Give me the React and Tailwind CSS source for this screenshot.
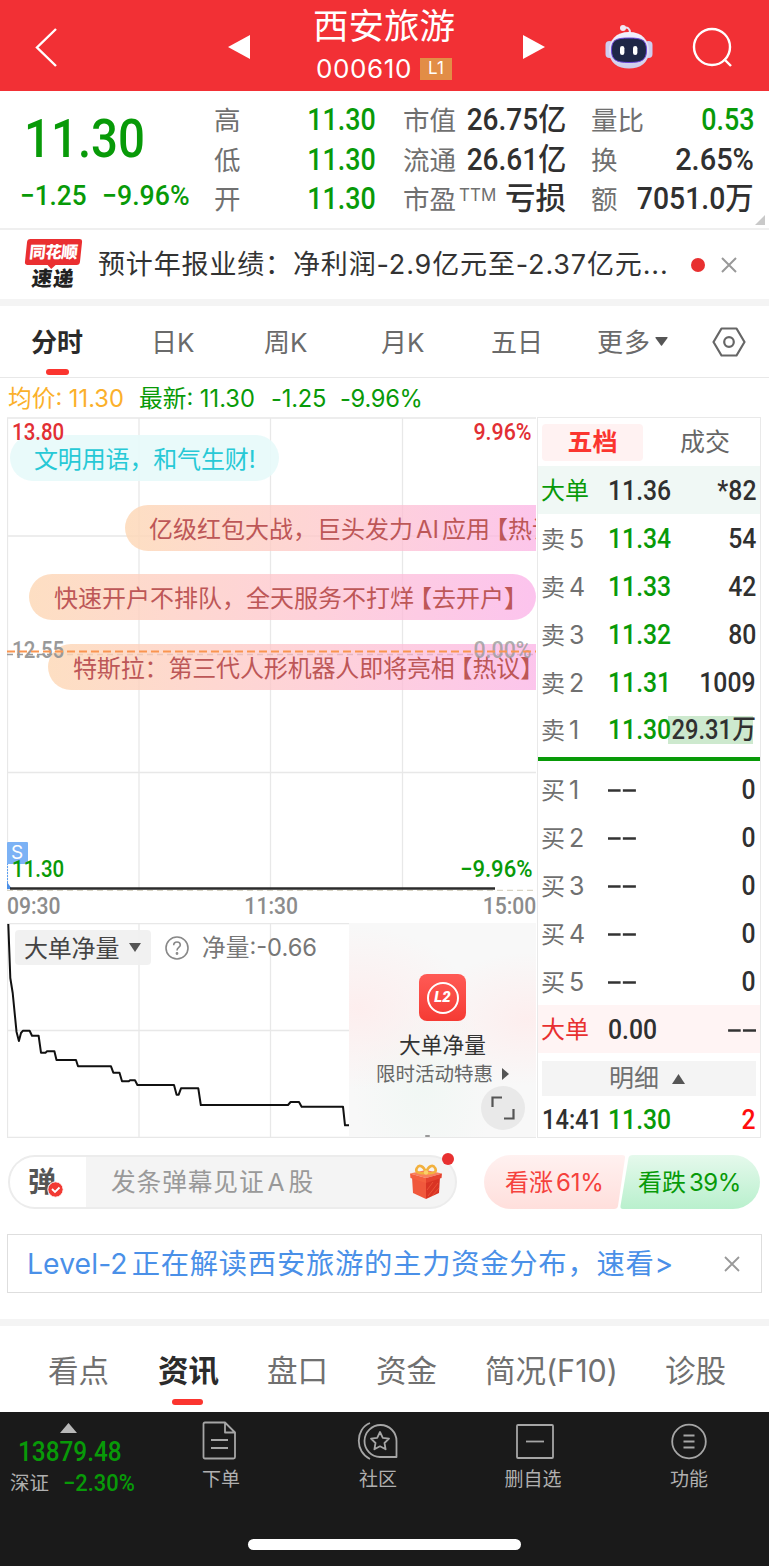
import React from "react";

const SANS = "font-['Inter','Noto_Sans_CJK_SC',sans-serif]";
const DIN = "font-['Roboto','Noto_Sans_CJK_SC',sans-serif] font-medium";

const sells = [
  ["5", "11.34", "54"],
  ["4", "11.33", "42"],
  ["3", "11.32", "80"],
  ["2", "11.31", "1009"],
];

function Header() {
  return (
    <header className="flex h-[91px] items-center bg-[#f23035] text-white">
      <svg className="ml-[34px] mt-1 h-[40px] w-[24px]" viewBox="0 0 24 40" fill="none" stroke="#fff" strokeWidth="2.4">
        <path d="M22 1 L3 19.5 L22 38" />
      </svg>
      <svg className="ml-[170px] mt-[3px] h-[26px] w-[23px]" viewBox="0 0 23 26">
        <path d="M0 13 L22 1 V25 Z" fill="#fff" />
      </svg>
      <div className="ml-[57px] flex w-[152px] flex-col items-center">
        <div className="-mt-[3px] h-[49px] text-[35.5px] leading-[46px]">西安旅游</div>
        <div className="flex h-[32px] items-center gap-[8px]">
          <span className="text-[26px] leading-[32px] tracking-[0.6px]">000610</span>
          <span className="flex h-[22px] w-[32px] items-center justify-center bg-[#e28d46] text-[17px] leading-none">L1</span>
        </div>
      </div>
      <svg className="ml-[62px] mt-[3px] h-[26px] w-[23px]" viewBox="0 0 23 26">
        <path d="M23 13 L1 1 V25 Z" fill="#fff" />
      </svg>
      <svg className="ml-[59px] h-[48px] w-[50px]" viewBox="0 0 50 48">
        <defs>
          <linearGradient id="shell" x1="0" y1="0" x2="0" y2="1">
            <stop offset="0" stopColor="#f3f1fd" />
            <stop offset="1" stopColor="#cfcdea" />
          </linearGradient>
        </defs>
        <path d="M19 6 Q26 4 26 11" fill="none" stroke="#e6e3f4" strokeWidth="2" />
        <circle cx="19" cy="6" r="3" fill="#f2e9f5" />
        <rect x="1.5" y="19" width="8" height="17" rx="4" fill="#cfcdf0" />
        <rect x="40.5" y="19" width="8" height="17" rx="4" fill="#cfcdf0" />
        <path d="M25 10 C38 10 45 18 45 29 C45 41 36 46.500 25 46.500 C14 46.500 5 41 5 29 C5 18 12 10 25 10Z" fill="url(#shell)" />
        <path d="M25 16 C38 16 42.500 18 42.500 28 C42.500 38 38 40.500 25 40.500 C12 40.500 7.500 38 7.500 28 C7.500 18 12 16 25 16Z" fill="#1f2747" stroke="#6a45d8" strokeWidth="1" />
        <rect x="16" y="24" width="4.400" height="9" rx="2.200" fill="#fff" />
        <rect x="29" y="24" width="4.400" height="9" rx="2.200" fill="#fff" />
      </svg>
      <svg className="ml-[38px] mt-[4px] h-[42px] w-[42px]" viewBox="0 0 42 42" fill="none" stroke="#fff" strokeWidth="2.400">
        <circle cx="20" cy="20" r="18" />
        <path d="M32 32 L39 39" />
      </svg>
    </header>
  );
}

function Quote() {
  const rows = [
    ["高", "市值", "", "26.75亿", "量比", "0.53", "text-[#089a08] scale-x-[0.88]"],
    ["低", "流通", "", "26.61亿", "换", "2.65%", "text-[#303030] scale-x-[0.95]"],
    ["开", "市盈", "TTM", "亏损", "额", "7051.0万", "text-[#303030] scale-x-[0.93]"],
  ];
  return (
    <section className="relative flex h-[139px] border-b-2 border-[#efefef]">
      <div className={`w-[214px] text-[#089a08] ${DIN}`}>
        <div className="ml-[24px] mt-[14px] h-[66px] origin-left scale-x-[0.87] text-[54.500px] leading-[66px]">11.30</div>
        <div className="ml-[20px] mt-[9px] flex h-[32px] text-[27.500px] leading-[32px]">
          <span className="w-[82px] origin-left scale-x-[0.95]">−1.25</span>
          <span className="origin-left scale-x-[0.97]">−9.96%</span>
        </div>
      </div>
      <div className="mt-[9px] flex flex-col">
        {rows.map(([a, b, sup, v, c, w, color]) => (
          <div key={a} className="flex h-[39.500px] items-center leading-[39px]">
            <span className="w-[70px] pt-[2px] text-[26.500px] text-[#707070]">{a}</span>
            <span className={`flex w-[92px] justify-end text-[30.500px] text-[#089a08] ${DIN}`}>
              <span className="origin-right scale-x-[0.88]">11.30</span>
            </span>
            <span className="ml-[27px] flex w-[163px] items-center text-[26.500px] text-[#707070]">
              <span className="shrink-0 whitespace-nowrap pt-[2px]">{b}</span>
              {sup && <span className="ml-[3px] -mt-[6px] text-[17px]">{sup}</span>}
              <span className={`ml-auto origin-right whitespace-nowrap text-[30.500px] text-[#303030] ${DIN} ${sup ? "" : "scale-x-[0.92]"}`}>{v}</span>
            </span>
            <span className="ml-[25px] flex w-[163px] items-center text-[26.500px] text-[#707070]">
              <span className="shrink-0 pt-[2px]">{c}</span>
              <span className={`ml-auto origin-right whitespace-nowrap text-[30.500px] ${DIN} ${color}`}>{w}</span>
            </span>
          </div>
        ))}
      </div>
      <svg className="absolute bottom-[3px] right-[4px] h-[10px] w-[10px]" viewBox="0 0 10 10">
        <path d="M10 0 V10 H0Z" fill="#c9c9c9" />
      </svg>
    </section>
  );
}

function News() {
  return (
    <section className="flex h-[76px] items-center border-b-[7px] border-[#f4f4f4]">
      <div className="ml-[24px] mt-[-2px] flex h-[50px] w-[58px] flex-col items-center">
        <div className="relative h-[26px] w-[55px] -skew-x-6 rounded-[3px] bg-[#ea2f31] text-center text-[16.500px] font-black leading-[26px] tracking-[-0.500px] text-white">
          同花顺
          <svg className="absolute left-[22px] top-[25px] h-[5px] w-[10px]" viewBox="0 0 10 5">
            <path d="M0 0 H10 L5 5Z" fill="#ea2f31" />
          </svg>
        </div>
        <div className="h-[24px] -skew-x-6 text-[20.500px] font-black leading-[27px] tracking-[1px] text-[#222]">速递</div>
      </div>
      <div className="ml-[16px] w-[580px] whitespace-nowrap pt-[2px] text-[27px] tracking-[0.850px] text-[#333]">
        预计年报业绩：净利润-2.9亿元至-2.37亿元...
      </div>
      <span className="ml-[13px] h-[14px] w-[14px] rounded-full bg-[#e83030]" />
      <svg className="ml-[16px] h-[16px] w-[16px]" viewBox="0 0 16 16" stroke="#999" strokeWidth="2">
        <path d="M1 1 L15 15 M15 1 L1 15" />
      </svg>
    </section>
  );
}

function PeriodTabs() {
  return (
    <nav className="grid h-[72px] grid-cols-[120px_113px_117px_110px_106px_115px_57px] items-center border-b border-[#e8e8e8] pl-[31px] pt-[2px] text-[26px] text-[#6a6a6a]">
      <span className="relative font-bold text-[#2b2b2b]">
        分时
        <i className="absolute left-[15px] top-[46px] h-[6px] w-[23px] rounded-full bg-[#fb352f]" />
      </span>
      <span>日K</span>
      <span>周K</span>
      <span>月K</span>
      <span>五日</span>
      <span className="flex items-center gap-[4px] tracking-[1px]">
        更多
        <svg className="mb-[3px] h-[9px] w-[13px]" viewBox="0 0 13 9"><path d="M1 0 H12 Q13 0 12.500 1 L7 8.500 Q6.500 9 6 8.500 L.5 1 Q0 0 1 0" fill="#555" /></svg>
      </span>
      <svg className="mb-[2px] h-[30px] w-[34px]" viewBox="0 0 34 30" fill="none" stroke="#666" strokeWidth="2.200">
        <path d="M9.500 1.500 H24.500 L32.500 15 L24.500 28.500 H9.500 L1.500 15Z" strokeLinejoin="round" />
        <circle cx="17" cy="15" r="4.800" />
      </svg>
    </nav>
  );
}

const orange = "bg-linear-to-r from-[#fdd9b8]/85 via-[#fec4cb]/75 to-[#fbb0e8]/75 text-[#bd5757]";

function Bullet({ className, children }) {
  return <div className={`absolute flex h-[46px] items-center whitespace-nowrap pt-[3px] text-[24px] ${className}`}>{children}</div>;
}

function PriceChart() {
  return (
    <div className="relative h-[474px] w-[529px] overflow-hidden">
      <svg className="block h-[474px] w-[529px]" viewBox="7 417 529 474" fill="none" stroke="#e8e8e8" strokeWidth="1.300">
        <path d="M7.500 891 V418 H536 M139 418 V890 M270.500 418 V890 M402.500 418 V890 M7 536 H536 M7 772.500 H536" />
        <path d="M7 654.500 H536" stroke="#999" strokeDasharray="6 4" />
        <path d="M7 890.500 H536" stroke="#d8d4c4" strokeDasharray="6 4" />
      </svg>
      <Bullet className="left-[3px] top-[18px] w-[269px] rounded-full bg-[#e7f9fa]/90 pl-[24px] tracking-[-0.150px] text-[#27c9d6]">文明用语，和气生财!</Bullet>
      <Bullet className={`left-[118px] top-[88px] w-[440px] rounded-l-full pl-[24px] ${orange}`}>
        亿级红包大战，巨头发力<span className="mx-[3px]">AI</span>应用<span className="-ml-[6px]">【热议】</span>
      </Bullet>
      <Bullet className={`left-[22px] top-[157px] w-[507px] rounded-full pl-[25px] ${orange}`}>
        快速开户不排队，全天服务不打烊<span className="-ml-[6px]">【去开户】</span>
      </Bullet>
      <Bullet className={`left-[41px] top-[227px] w-[510px] rounded-l-full pl-[25px] tracking-[-0.150px] ${orange}`}>
        特斯拉：第三代人形机器人即将亮相<span className="-ml-[6px]">【热议】</span>
      </Bullet>
      <div className={`absolute left-[5px] top-[4px] text-[23px] leading-[24px] text-[#e22f34] ${DIN}`}><span className="inline-block origin-left scale-x-[0.89]">13.80</span></div>
      <div className={`absolute right-[4px] top-[4px] text-[23px] leading-[24px] text-[#e22f34] ${DIN}`}><span className="inline-block origin-right scale-x-[0.93]">9.96%</span></div>
      <div className={`absolute left-[5px] top-[222px] text-[23px] leading-[24px] text-[#999] ${DIN}`}><span className="inline-block origin-left scale-x-[0.89]">12.55</span></div>
      <div className={`absolute right-[4px] top-[222px] text-[23px] leading-[24px] text-[#999]/80 ${DIN}`}><span className="inline-block origin-right scale-x-[0.93]">0.00%</span></div>
      <svg className="absolute left-0 top-[233px] h-[3px] w-[529px]" viewBox="0 0 529 3"><path d="M0 1.500 H529" stroke="#fa9550" strokeWidth="2" strokeDasharray="8 4" /></svg>
      <svg className="absolute left-0 top-[425px] h-[49px] w-[529px]" viewBox="0 0 529 49">
        <path d="M0 18 V47" stroke="#5c9ff0" strokeWidth="2" strokeDasharray="2 1" />
        <path d="M0 40 L5 47 H0Z" fill="#4b8fe8" />
        <rect x="0" y="0" width="21" height="22" rx="1" fill="#7cb2f5" />
        <path d="M3 46.500 H488" stroke="#2b2b2b" strokeWidth="2.400" />
      </svg>
      <span className="absolute left-[4px] top-[425px] text-[19px] leading-[22px] text-white">S</span>
      <div className={`absolute left-[5px] top-[441px] text-[23px] leading-[24px] text-[#089a08] ${DIN}`}><span className="inline-block origin-left scale-x-[0.89]">11.30</span></div>
      <div className={`absolute right-[4px] top-[441px] text-[23px] leading-[24px] text-[#089a08] ${DIN}`}><span className="inline-block origin-right scale-x-[0.96]">−9.96%</span></div>
    </div>
  );
}

function FlowChart() {
  return (
    <div className="relative flex h-[215px] w-[529px] justify-end">
      <svg className="absolute left-0 top-0 h-[215px] w-[529px]" viewBox="7 923 529 215" fill="none" stroke="#e8e8e8" strokeWidth="1.300">
        <path d="M7.500 923.500 H536 M7.500 923 V1137.500 H536 M139 923 V1137 M270.500 923 V1137 M7 1030.500 H349" />
        <polyline
          stroke="#111"
          strokeWidth="2"
          strokeLinejoin="round"
          points="8.3,924 10.3,978 12.7,993 16.5,1031.7 18.9,1041 21,1033 23,1030.700 29.600,1030.700 32,1035.700 38.600,1035.700 41,1052.700 45.500,1052.700 47,1051.300 54.400,1051.300 56.500,1060 76,1060 78,1066.300 111,1066.300 113.300,1072.700 119.500,1072.700 122,1081.300 128.800,1081.300 130,1080.300 135,1080.300 137.400,1085 174,1085 176.600,1094.700 178.700,1094.700 181,1088.300 198.300,1088.300 200.800,1105 288,1105 290.600,1102 299,1102 301.600,1106.700 343,1106.700 345,1125.300 349,1125.300"
        />
      </svg>
      <div className="absolute left-[8px] top-[7px] flex h-[35px] items-center">
        <span className="flex h-[35px] w-[136px] items-center gap-[10px] rounded bg-[#efefef]/90 pl-[9px] pt-[2px] text-[24px] tracking-[-0.200px] text-[#444]">
          大单净量
          <svg className="mb-[2px] h-[9px] w-[12px]" viewBox="0 0 12 9"><path d="M0 0 H12 L6 9Z" fill="#555" /></svg>
        </span>
        <svg className="ml-[14px] h-[24px] w-[24px]" viewBox="0 0 24 24" fill="none" stroke="#888" strokeWidth="1.600">
          <circle cx="12" cy="12" r="11" />
          <path d="M8.700 9.300 C8.700 7 10.200 6 12 6 C14 6 15.300 7.200 15.300 9 C15.300 11.500 12 11.500 12 14.500" />
          <circle cx="12" cy="17.500" r=".6" fill="#888" />
        </svg>
        <span className="ml-[13px] whitespace-nowrap text-[23.700px] text-[#777]">净量:-0.66</span>
      </div>
      <div className="relative flex h-[214px] w-[187px] flex-col items-center overflow-hidden bg-[#f8f8f8] bg-[radial-gradient(ellipse_at_5%_40%,#fdeeee_0%,transparent_45%),radial-gradient(ellipse_at_95%_45%,#fdeeee_0%,transparent_40%),radial-gradient(ellipse_at_40%_75%,#f1f7f4_0%,transparent_45%)]">
        <div className="mt-[51px] flex h-[47px] w-[47px] items-center justify-center rounded-[8px] bg-linear-to-b from-[#ff5a55] to-[#f53a33]">
          <span className="flex h-[32px] w-[32px] items-center justify-center rounded-full border-[2.500px] border-white font-['Roboto',sans-serif] text-[15px] font-black italic text-white">L2</span>
        </div>
        <div className="mt-[9px] h-[29px] text-[21.700px] leading-[30px] text-[#333]">大单净量</div>
        <div className="flex h-[30px] items-center gap-[9px] text-[19.500px] leading-[30px] text-[#666]">
          限时活动特惠
          <svg className="h-[12px] w-[7px]" viewBox="0 0 7 12"><path d="M0 0 L7 6 L0 12Z" fill="#555" /></svg>
        </div>
        <span className="absolute bottom-[7px] right-[11px] flex h-[44px] w-[44px] items-center justify-center rounded-full bg-[#e9e9e9]">
          <svg className="h-[24px] w-[24px]" viewBox="0 0 24 24" fill="none" stroke="#555" strokeWidth="2.200"><path d="M1.500 11 V1.500 H11 M22.500 13 V22.500 H13" /></svg>
        </span>
        <i className="absolute bottom-0 left-[76px] h-[2px] w-[5px] rounded-full bg-[#999]" />
      </div>
    </div>
  );
}

function BookRow({ label, price, vol, tone = "text-[#303030]", labelTone = "text-[#707070]", className = "" }) {
  return (
    <div className={`flex h-[48px] items-center pl-[3px] pr-[4px] pt-[2px] text-[24px] leading-[46px] ${className}`}>
      <span className={`w-[67px] whitespace-nowrap ${labelTone}`}>{label}</span>
      <span className={`origin-left scale-x-[0.9] text-[27.500px] ${tone} ${DIN}`}>{price}</span>
      <span className={`ml-auto origin-right scale-x-[0.9] text-[27.500px] text-[#303030] ${DIN}`}>{vol}</span>
    </div>
  );
}

function Dash() {
  return (
    <svg className="h-[3px] w-[31px]" viewBox="0 0 31 3">
      <path d="M0 1.500 H14 M16.500 1.500 H31" stroke="#333" strokeWidth="2.600" />
    </svg>
  );
}

function OrderBook() {
  const label = (side, n) => (
    <>
      {side}
      <span className="ml-[4px] text-[25px]">{n}</span>
    </>
  );
  return (
    <aside className="h-[721px] w-[224px] border-[1.500px] border-[#e9e9e9]">
      <div className="flex h-[48px] items-center pl-[4px] text-[25px]">
        <span className="flex h-[37px] w-[101px] items-center justify-center rounded bg-[#fff2f2] pt-[2px] font-bold text-[#fb352f]">五档</span>
        <span className="ml-[37px] pt-[2px] text-[#666]">成交</span>
      </div>
      <BookRow label="大单" price="11.36" vol="*82" labelTone="text-[#089a08]" className="bg-[#f0f8f5]" />
      {sells.map(([n, p, v]) => (
        <BookRow key={n} label={label("卖", n)} price={p} vol={v} tone="text-[#089a08]" />
      ))}
      <div className="flex h-[55px] items-center border-b-[4px] border-[#089a08] pb-[3px] pl-[3px] pr-[4px] text-[24px] leading-[46px]">
        <span className="w-[67px] text-[#707070]">{label("卖", "1")}</span>
        <span className={`w-[60px] origin-left scale-x-[0.9] text-[27.500px] text-[#089a08] ${DIN}`}>11.30</span>
        <span className="flex h-[28px] w-[85px] items-center justify-end bg-[#cde9ce]">
          <span className={`-mr-[3px] origin-right scale-x-[0.88] whitespace-nowrap text-[27px] text-[#303030] ${DIN}`}>29.31万</span>
        </span>
      </div>
      <div className="h-[4px]" />
      {["1", "2", "3", "4", "5"].map((n) => (
        <BookRow key={n} label={label("买", n)} price={<Dash />} vol="0" />
      ))}
      <BookRow label="大单" price="0.00" vol={<Dash />} labelTone="text-[#e83030]" className="bg-[#fff4f4]" />
      <div className="mx-[4px] mt-[8px] flex h-[35px] items-center justify-center gap-[13px] bg-[#f4f4f4] pr-[4px] text-[25px] text-[#707070]">
        明细
        <svg className="h-[10px] w-[13px]" viewBox="0 0 13 10"><path d="M6.500 0 L13 10 H0Z" fill="#555" /></svg>
      </div>
      <div className={`flex h-[42px] items-center pl-[4px] pr-[4px] pt-[5px] text-[27.500px] leading-[37px] ${DIN}`}>
        <span className="w-[66px] origin-left scale-x-[0.86] text-[#303030]">14:41</span>
        <span className="origin-left scale-x-[0.9] text-[#089a08]">11.30</span>
        <span className="ml-auto origin-right scale-x-[0.9] text-[#ff0d0d]">2</span>
      </div>
    </aside>
  );
}

function Gift() {
  return (
    <svg className="h-[36px] w-[34px]" viewBox="0 0 34 36">
      <path d="M3 13 L17 17 L17 35 L4 29Z" fill="#f0583c" />
      <path d="M31 13 L17 17 L17 35 L30 29Z" fill="#d93424" />
      <path d="M1 9.500 L17 6 L33 9.500 L17 14Z" fill="#f9805c" />
      <path d="M1 9.500 L17 14 V19 L1.500 14Z" fill="#f4603f" />
      <path d="M33 9.500 L17 14 V19 L32.500 14Z" fill="#e5432f" />
      <path d="M19 32 L29 19 M23 32 L30 24 M18 26 L24 18" stroke="#ea5236" strokeWidth="1" />
      <g fill="none" stroke="#f2b13e" strokeWidth="2.600">
        <path d="M16 9 C8 10 6 7 8 4 C10 0 15 2 16.500 8" />
        <path d="M18 9 C26 10 28 7 26 4 C24 0 19 2 17.500 8" />
      </g>
      <circle cx="17" cy="8.500" r="2.200" fill="#fbd06a" />
    </svg>
  );
}

function Comments() {
  return (
    <section className="mt-[17px] flex h-[54px] px-[8px]">
      <div className="relative flex w-[449px] items-center">
        <div className="flex h-[54px] w-full items-center overflow-hidden rounded-full border-2 border-[#ececec] bg-[#f4f4f4]">
          <div className="relative flex h-full w-[76px] items-center bg-white pl-[18px] text-[28px] font-bold text-[#555]">
            弹
            <svg className="absolute left-[37px] top-[24px] h-[17px] w-[17px]" viewBox="0 0 17 17">
              <circle cx="8.500" cy="8.500" r="7.700" fill="#f23a33" stroke="#fff" />
              <path d="M5 8 L8 11 L12.500 6.500" fill="none" stroke="#fff" strokeWidth="1.800" />
            </svg>
          </div>
          <span className="ml-[25px] pt-[2px] text-[24.700px] tracking-[0.900px] text-[#999]">发条弹幕见证<span className="mx-[3px]">A</span>股</span>
          <span className="ml-auto mr-[12px] mt-[-1px]"><Gift /></span>
        </div>
        <i className="absolute right-[3px] top-[-2px] h-[12px] w-[12px] rounded-full bg-[#e83030]" />
      </div>
      <div className="relative ml-[27px] flex w-[276px] items-center pt-px text-[24px]">
        <svg className="absolute inset-0 h-[54px] w-[276px]" viewBox="0 0 276 54">
          <defs>
            <linearGradient id="up" x1="0" y1="0" x2="0" y2="1"><stop offset="0" stopColor="#fff1f0" /><stop offset="1" stopColor="#ffdfdc" /></linearGradient>
            <linearGradient id="down" x1="0" y1="0" x2="0" y2="1"><stop offset="0" stopColor="#e5f9ec" /><stop offset="1" stopColor="#b9f0cd" /></linearGradient>
          </defs>
          <path d="M27 0 H138 Q141.500 0 141 3 L134 51 Q133.500 54 130 54 H27 A27 27 0 0 1 27 0Z" fill="url(#up)" />
          <path d="M149 0 H249 A27 27 0 0 1 249 54 H139 Q136 54 136.500 51 L144.500 3 Q145 0 149 0Z" fill="url(#down)" />
        </svg>
        <span className="relative ml-[21px] w-[133px] whitespace-nowrap text-[#f5413c]">看涨<span className="ml-[3px] tracking-[-0.200px]">61%</span></span>
        <span className="relative whitespace-nowrap text-[#089a08]">看跌<span className="ml-[3px] tracking-[-0.500px]">39%</span></span>
      </div>
    </section>
  );
}

function InfoTabs() {
  return (
    <nav className="grid h-[93px] grid-cols-[110px_109px_109px_109px_180px_100px] items-center border-t-[7px] border-[#f4f4f4] pl-[48px] pt-[3px] text-[30.500px] text-[#707070]">
      <span>看点</span>
      <span className="relative text-[#2b2b2b]">
        <span className="font-bold">资讯</span>
        <i className="absolute left-[14px] top-[51px] h-[6px] w-[31px] rounded-full bg-[#fb352f]" />
      </span>
      <span>盘口</span>
      <span>资金</span>
      <span className="whitespace-nowrap">简况(F10)</span>
      <span>诊股</span>
    </nav>
  );
}

function FooterItem({ label, className, children }) {
  return (
    <div className={`flex flex-col items-center text-[19px] leading-[28px] text-[#b0b0b0] ${className}`}>
      <svg className="mb-[5px] mt-[9px] h-[40px] w-[42px]" viewBox="0 0 42 40" fill="none" stroke="#a6a6a6" strokeWidth="1.800" strokeLinejoin="round">
        {children}
      </svg>
      {label}
    </div>
  );
}

function Footer() {
  return (
    <footer className="flex h-[154px] flex-col bg-[#1a1a1a]">
      <div className="flex h-[127px]">
        <div className={`flex w-[142px] flex-col ${DIN}`}>
          <svg className="ml-[60px] mt-[11px] h-[10px] w-[17px]" viewBox="0 0 17 10"><path d="M8.500 0 L17 10 H0Z" fill="#b8b8b8" /></svg>
          <span className="ml-[18px] mt-[2px] origin-left scale-x-[0.885] text-[27.500px] leading-[34px] text-[#089a08]">13879.48</span>
          <div className="ml-[10px] flex h-[28px] items-center">
            <span className="w-[53px] pt-px text-[19.500px] font-normal leading-[26px] text-[#b0b0b0]">深证</span>
            <span className="origin-left scale-x-[0.93] text-[23.500px] leading-[26px] text-[#089a08]">−2.30%</span>
          </div>
        </div>
        <FooterItem label="下单" className="w-[158px]">
          <path d="M5 1.500 H25 L35 11.500 V36 Q35 37.500 33.500 37.500 H5 Q3.500 37.500 3.500 36 V3 Q3.500 1.500 5 1.500Z M25 1.500 V11.500 H35 M11 19 H28 M11 27 H28" />
        </FooterItem>
        <FooterItem label="社区" className="w-[156px]">
          <path d="M13 2 C-2 8 -2 31 13 38" />
          <path d="M39.500 20 V36 H23 A16 16 0 1 1 39.500 20Z" />
          <path d="M23 11 L25.800 16.800 L32 17.700 L27.500 22 L28.600 28.300 L23 25.300 L17.400 28.300 L18.500 22 L14 17.700 L20.200 16.800Z" />
        </FooterItem>
        <FooterItem label="删自选" className="w-[154px]">
          <rect x="5" y="4" width="36" height="33" rx="1" />
          <path d="M14 20.500 H32" />
        </FooterItem>
        <FooterItem label="功能" className="w-[158px]">
          <circle cx="21" cy="20.500" r="16.800" />
          <path d="M15.500 14.500 H26.500 M15.500 20.500 H26.500 M15.500 26.500 H26.500" />
        </FooterItem>
      </div>
      <div className="ml-[248px] h-[11px] w-[273px] rounded-full bg-white" />
    </footer>
  );
}

export default function App() {
  return (
    <div className={`h-[1566px] w-[769px] overflow-hidden bg-white ${SANS}`}>
      <Header />
      <Quote />
      <News />
      <PeriodTabs />
      <div className="grid h-[39px] grid-cols-[131px_132px_69px_100px] items-center whitespace-nowrap pl-[8px] pt-[2px] text-[23.700px] text-[#089a08]">
        <span className="text-[#fbb02b]">均价: 11.30</span>
        <span>最新: 11.30</span>
        <span className="tracking-[-0.200px]">-1.25</span>
        <span className="tracking-[-0.300px]">-9.96%</span>
      </div>
      <main className="flex pl-[7px]">
        <div className="flex w-[530px] flex-col">
          <PriceChart />
          <div className={`grid h-[32px] w-[529px] grid-cols-3 text-[24px] leading-[31px] text-[#8c8c8c] ${DIN}`}>
            <span className="origin-left scale-x-[0.88]">09:30</span>
            <span className="scale-x-[0.88] text-center">11:30</span>
            <span className="origin-right scale-x-[0.88] text-right">15:00</span>
          </div>
          <FlowChart />
        </div>
        <OrderBook />
      </main>
      <Comments />
      <section className="mx-[7px] mt-[25px] flex h-[59px] items-center border-[1.500px] border-[#dedede] pl-[19px]">
        <span className="w-[697px] whitespace-nowrap pt-[2px] text-[28.300px] tracking-[0.750px] text-[#4a90e8]">
          <span className="tracking-[0.100px]">Level-2</span><span className="ml-[4px]">正在解读西安旅游的主力资金分布，速看&gt;</span>
        </span>
        <svg className="h-[16px] w-[16px]" viewBox="0 0 16 16" stroke="#999" strokeWidth="1.800"><path d="M1 1 L15 15 M15 1 L1 15" /></svg>
      </section>
      <div className="h-[26px]" />
      <InfoTabs />
      <Footer />
    </div>
  );
}
